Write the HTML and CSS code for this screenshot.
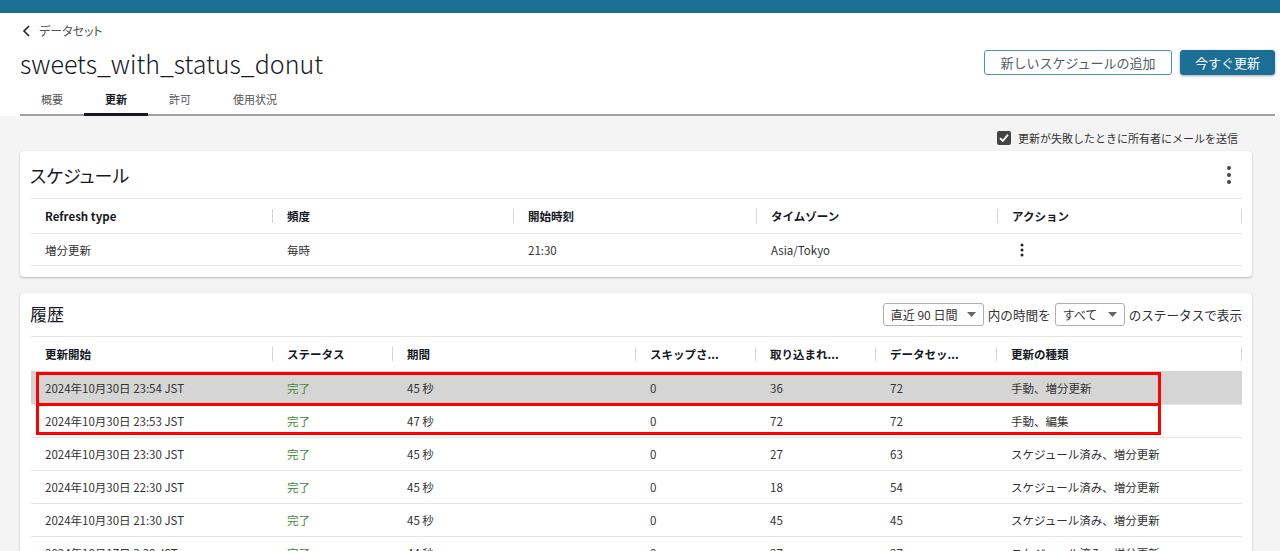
FILE: index.html
```html
<!DOCTYPE html>
<html lang="ja">
<head>
<meta charset="utf-8">
<title>sweets_with_status_donut</title>
<link rel="stylesheet" href="styles.css">
</head>
<body>
<div class="topbar"></div>
<header class="page-header">
  <a class="back">
    <svg class="chev" width="10" height="12" viewBox="0 0 10 12"><path d="M7 1 L2 6 L7 11" fill="none" stroke="#222" stroke-width="1.6"/></svg>
    <span>データセット</span>
  </a>
  <div class="title-row">
    <h1>sweets_with_status_donut</h1>
    <div class="actions">
      <button class="btn btn-outline">新しいスケジュールの追加</button>
      <button class="btn btn-primary">今すぐ更新</button>
    </div>
  </div>
  <nav class="tabs">
    <span class="tab">概要</span>
    <span class="tab active">更新</span>
    <span class="tab">許可</span>
    <span class="tab">使用状況</span>
  </nav>
</header>
<main class="content">
  <div class="notify">
    <span class="checkbox"><svg width="14" height="14" viewBox="0 0 14 14"><path d="M3 7.2 L5.8 10 L11 3.6" fill="none" stroke="#fff" stroke-width="1.8"/></svg></span>
    <span>更新が失敗したときに所有者にメールを送信</span>
  </div>

  <section class="card">
    <div class="card-head sched-head">
      <h2>スケジュール</h2>
      <svg class="kebab-big" width="6" height="20" viewBox="0 0 6 20"><circle cx="3" cy="3" r="2" fill="#444"/><circle cx="3" cy="10" r="2" fill="#444"/><circle cx="3" cy="17" r="2" fill="#444"/></svg>
    </div>
    <div class="grid sched-grid">
      <div class="hrow">
        <div class="hcell">Refresh type</div>
        <div class="hcell">頻度</div>
        <div class="hcell">開始時刻</div>
        <div class="hcell">タイムゾーン</div>
        <div class="hcell">アクション</div>
      </div>
      <div class="brow last">
        <div class="cell">増分更新</div>
        <div class="cell">毎時</div>
        <div class="cell">21:30</div>
        <div class="cell">Asia/Tokyo</div>
        <div class="cell"><svg class="kebab-small" width="4" height="14" viewBox="0 0 4 14"><circle cx="2" cy="2" r="1.5" fill="#222"/><circle cx="2" cy="7" r="1.5" fill="#222"/><circle cx="2" cy="12" r="1.5" fill="#222"/></svg></div>
      </div>
    </div>
  </section>

  <section class="card history">
    <div class="card-head hist-head">
      <h2>履歴</h2>
      <div class="filters">
        <span class="select sel-range">直近 90 日間<svg width="9" height="5" viewBox="0 0 9 5"><path d="M0 0 H9 L4.5 5 Z" fill="#666"/></svg></span>
        <span>内の時間を</span>
        <span class="select sel-status">すべて<svg width="9" height="5" viewBox="0 0 9 5"><path d="M0 0 H9 L4.5 5 Z" fill="#666"/></svg></span>
        <span>のステータスで表示</span>
      </div>
    </div>
    <div class="grid hist-grid">
      <div class="hrow">
        <div class="hcell">更新開始</div>
        <div class="hcell">ステータス</div>
        <div class="hcell">期間</div>
        <div class="hcell">スキップさ...</div>
        <div class="hcell">取り込まれ...</div>
        <div class="hcell">データセッ...</div>
        <div class="hcell">更新の種類</div>
      </div>
      <div class="rows">
        <div class="brow selected">
          <div class="cell">2024年10月30日 23:54 JST</div><div class="cell ok">完了</div><div class="cell">45 秒</div><div class="cell">0</div><div class="cell">36</div><div class="cell">72</div><div class="cell">手動、増分更新</div>
        </div>
        <div class="brow">
          <div class="cell">2024年10月30日 23:53 JST</div><div class="cell ok">完了</div><div class="cell">47 秒</div><div class="cell">0</div><div class="cell">72</div><div class="cell">72</div><div class="cell">手動、編集</div>
        </div>
        <div class="brow">
          <div class="cell">2024年10月30日 23:30 JST</div><div class="cell ok">完了</div><div class="cell">45 秒</div><div class="cell">0</div><div class="cell">27</div><div class="cell">63</div><div class="cell">スケジュール済み、増分更新</div>
        </div>
        <div class="brow">
          <div class="cell">2024年10月30日 22:30 JST</div><div class="cell ok">完了</div><div class="cell">45 秒</div><div class="cell">0</div><div class="cell">18</div><div class="cell">54</div><div class="cell">スケジュール済み、増分更新</div>
        </div>
        <div class="brow">
          <div class="cell">2024年10月30日 21:30 JST</div><div class="cell ok">完了</div><div class="cell">45 秒</div><div class="cell">0</div><div class="cell">45</div><div class="cell">45</div><div class="cell">スケジュール済み、増分更新</div>
        </div>
        <div class="brow">
          <div class="cell">2024年10月17日 3:30 JST</div><div class="cell ok">完了</div><div class="cell">44 秒</div><div class="cell">0</div><div class="cell">27</div><div class="cell">27</div><div class="cell">スケジュール済み、増分更新</div>
        </div>
        <div class="mark mark-1"></div>
        <div class="mark mark-2"></div>
      </div>
    </div>
  </section>
</main>
</body>
</html>
```

FILE: styles.css
```css
* { box-sizing: border-box; }

html, body {
  margin: 0;
  padding: 0;
}

body {
  background: #f4f4f4;
  font-family: "Noto Sans CJK JP", "Noto Sans", sans-serif;
  font-size: 12px;
  color: #333;
  overflow: hidden;
  height: 551px;
}

.topbar {
  height: 13px;
  background: #1b6f95;
}

.page-header {
  background: #fff;
  padding: 10px 5px 0 20px;
}

.back {
  display: flex;
  align-items: center;
  gap: 7px;
  height: 16px;
  line-height: 16px;
  color: #555;
  font-size: 12px;
  font-feature-settings: "palt";
}
.chev { margin-left: 2px; }

.title-row {
  display: flex;
  align-items: center;
  justify-content: space-between;
  margin-top: 8px;
  height: 32px;
}

h1 {
  margin: 0;
  font-size: 25px;
  font-weight: 300;
  line-height: 32px;
  color: #16191f;
}

.actions {
  display: flex;
  gap: 8px;
  margin-top: -1px;
}

.btn {
  height: 25px;
  border-radius: 3px;
  font-family: inherit;
  font-size: 13px;
  padding: 0;
  cursor: pointer;
}
.btn-outline {
  width: 188px;
  background: #fff;
  border: 1px solid #4b93bb;
  color: #545b64;
}
.btn-primary {
  width: 95px;
  background: #1b6f95;
  border: 1px solid #1b6f95;
  color: #fff;
  box-shadow: 0 1px 3px rgba(0,0,0,0.35);
}

.tabs {
  display: flex;
  margin-top: 5px;
  height: 32px;
  box-shadow: inset 0 -2px 0 #a0a0a0;
}
.tab {
  padding: 7px 21px 9px;
  line-height: 16px;
  font-size: 11px;
  color: #555;
}
.tab.active {
  color: #16191f;
  font-weight: 700;
  box-shadow: inset 0 -3px 0 #16191f;
}

.content {
  padding: 0 28px 0 20px;
}

.notify {
  display: flex;
  justify-content: flex-end;
  align-items: center;
  gap: 7px;
  padding: 14px 14px 0 0;
  height: 30px;
  line-height: 16px;
  font-size: 11px;
  color: #333;
}
.checkbox {
  width: 14px;
  height: 14px;
  background: #444;
  border-radius: 2px;
  display: flex;
}

.card {
  background: #fff;
  border-radius: 4px;
  box-shadow: 0 1px 2px rgba(0,0,0,0.25), 0 0 1px rgba(0,0,0,0.15);
  margin-top: 5px;
  padding: 0 10px 11px 11px;
}
.card.history {
  margin-top: 16px;
  padding-bottom: 0;
}

.card-head {
  display: flex;
  align-items: center;
  justify-content: space-between;
}
.sched-head {
  height: 47px;
  padding: 0 10px 0 0;
  margin-left: -1px;
}
.hist-head {
  height: 43px;
  margin-left: -1px;
}
h2 {
  margin: 0;
  font-size: 18px;
  font-weight: 400;
  color: #16191f;
  line-height: 24px;
  font-feature-settings: "palt";
}
.hist-head h2 { margin-top: -1px; font-size: 17px; }

.filters {
  display: flex;
  align-items: center;
  gap: 4px;
  font-size: 12.6px;
  color: #333;
}
.select {
  display: inline-flex;
  align-items: center;
  justify-content: space-between;
  height: 23px;
  border: 1px solid #aab0b6;
  border-radius: 3px;
  padding: 0 7px 0 7px;
  font-size: 12px;
  color: #333;
}
.sel-range { width: 101px; }
.sel-status { width: 70px; }

.grid .hrow,
.grid .brow {
  display: grid;
}
.sched-grid .hrow,
.sched-grid .brow {
  grid-template-columns: 242px 241px 243px 241px 244px;
}
.hist-grid .hrow,
.hist-grid .brow {
  grid-template-columns: 242px 120px 243px 120px 120px 121px 245px;
}

.hrow {
  height: 35px;
  border-top: 1px solid #e4e4e4;
}
.hcell {
  position: relative;
  padding-left: 14px;
  display: flex;
  align-items: center;
  font-weight: 700;
  font-size: 11.5px;
  color: #16191f;
}
.hcell::after {
  content: "";
  position: absolute;
  right: 0;
  top: 10px;
  height: 14px;
  width: 1px;
  background: #d5d5d5;
}

.brow {
  height: 33px;
  border-top: 1px solid #e4e4e4;
}
.brow.last {
  border-bottom: 1px solid #e4e4e4;
}
.cell {
  padding-left: 14px;
  display: flex;
  align-items: center;
  font-size: 11.5px;
  color: #333;
  white-space: nowrap;
}
.cell.ok { color: #3d8b37; }
.kebab-small { margin-left: 8px; }

.brow.selected {
  background: #d5d5d5;
  border-top-color: #d5d5d5;
}

.rows {
  position: relative;
}
.mark {
  position: absolute;
  left: 5px;
  width: 1125px;
  border: 3px solid #ff0000;
  pointer-events: none;
}
.mark-1 { top: 1px; height: 34px; }
.mark-2 { top: 32px; height: 32px; }
```
